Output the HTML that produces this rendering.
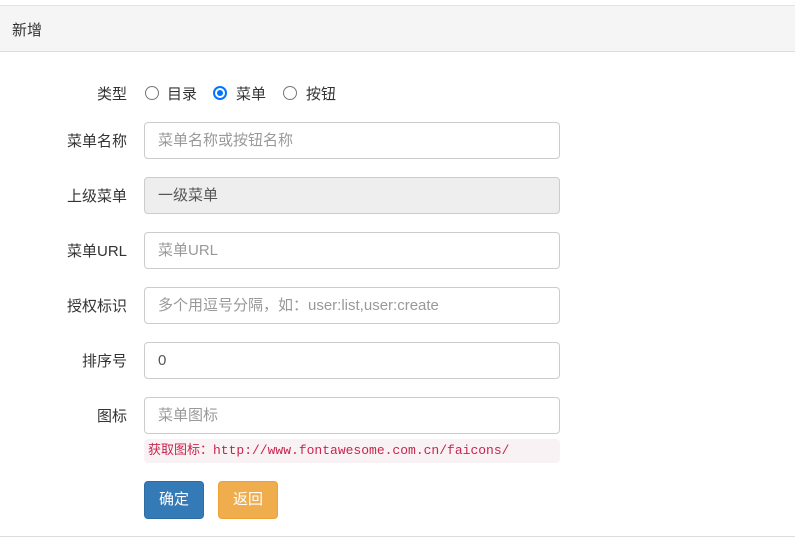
<!DOCTYPE html>
<html><head><meta charset="utf-8"><style>
*{box-sizing:border-box;margin:0;padding:0}
body{width:795px;height:550px;background:#fff;font-family:"Liberation Sans","Noto Sans CJK SC",sans-serif;font-size:14px;color:#333;position:relative;overflow:hidden}
.hd{position:absolute;left:0;top:5px;width:795px;height:47px;background:#f5f5f5;border-top:1px solid #e3e3e3;border-bottom:1px solid #ddd;padding:13px 12px;font-size:15px}
.lbl{position:absolute;right:668px;font-size:15px;text-align:right;white-space:nowrap}
.in{position:absolute;left:144px;width:416px;height:37px;border:1px solid #ccc;border-radius:4px;padding:0 13px;line-height:35px;font-size:15px;color:#999;background:#fff}
.ro{background:#eee;color:#555}
.val{color:#555}
.rad{position:absolute;top:86px;width:14px;height:14px;border:1px solid #767676;border-radius:50%;background:#fff}
.rad.on{border:2px solid #0075ff}
.rad.on:after{content:"";position:absolute;left:2px;top:2px;width:6px;height:6px;border-radius:50%;background:#0075ff}
.rt{position:absolute;top:83px;font-size:15px}
.code{position:absolute;left:144px;top:439px;width:416px;height:24px;background:#f9f2f4;border-radius:4px;color:#c7254e;font-family:"Liberation Mono","Noto Sans CJK SC",monospace;font-size:13px;line-height:24px;padding-left:4px}
.btn{position:absolute;top:481px;width:60px;height:38px;border-radius:4px;color:#fff;font-size:15px;text-align:center;line-height:36px}
</style></head><body>
<div class="hd">新增</div>
<div class="lbl" style="top:83px">类型</div>
<div class="rad" style="left:145px"></div><div class="rt" style="left:167px">目录</div>
<div class="rad on" style="left:213px"></div><div class="rt" style="left:236px">菜单</div>
<div class="rad" style="left:283px"></div><div class="rt" style="left:306px">按钮</div>

<div class="lbl" style="top:130px">菜单名称</div><div class="in" style="top:122px">菜单名称或按钮名称</div>
<div class="lbl" style="top:185px">上级菜单</div><div class="in ro" style="top:177px">一级菜单</div>
<div class="lbl" style="top:240px">菜单URL</div><div class="in" style="top:232px">菜单URL</div>
<div class="lbl" style="top:295px">授权标识</div><div class="in" style="top:287px">多个用逗号分隔，如：user:list,user:create</div>
<div class="lbl" style="top:350px">排序号</div><div class="in val" style="top:342px">0</div>
<div class="lbl" style="top:405px">图标</div><div class="in" style="top:397px">菜单图标</div>
<div class="code">获取图标：http://www.fontawesome.com.cn/faicons/</div>
<div class="btn" style="left:144px;background:#337ab7;border:1px solid #2e6da4">确定</div>
<div class="btn" style="left:218px;background:#f0ad4e;border:1px solid #eea236">返回</div>
<div style="position:absolute;left:0;top:536px;width:795px;height:1px;background:#ddd"></div>
</body></html>
